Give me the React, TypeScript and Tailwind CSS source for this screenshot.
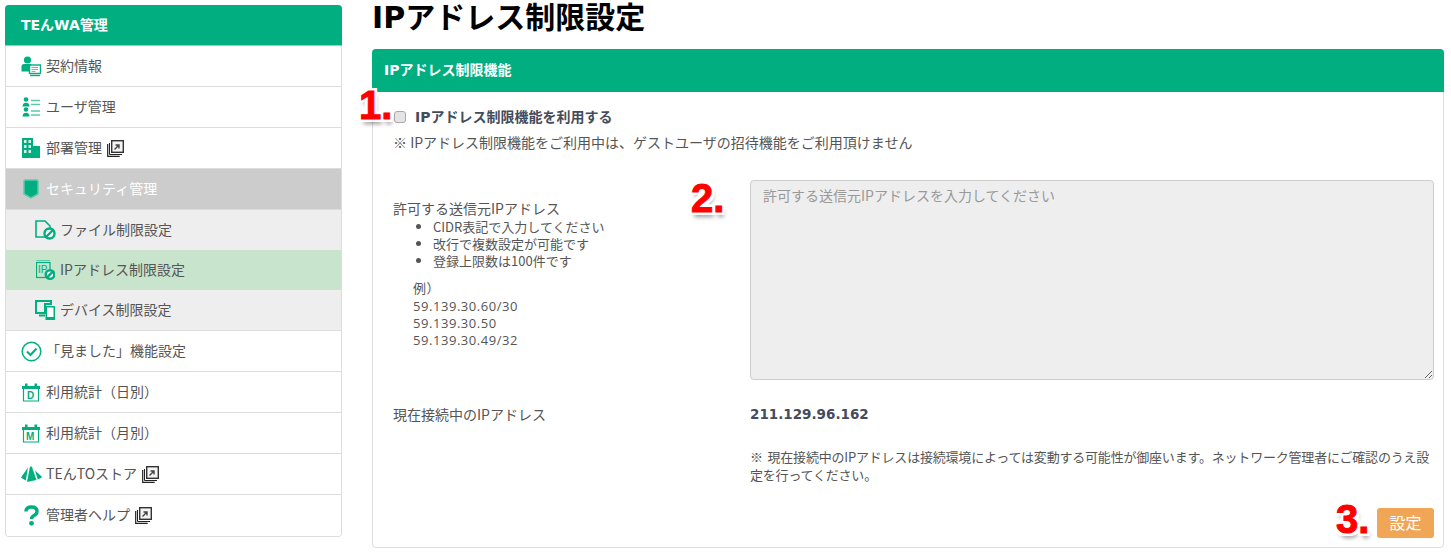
import { ReactNode } from 'react';

function ExternalIcon() {
  return (
    <svg width="17" height="17" viewBox="0 0 17 17" className="ml-[5px] shrink-0">
      <path d="M0.700 4v12.300h12" fill="none" stroke="#222" strokeWidth="1.200" />
      <path d="M2.500 3v11.500H15" fill="none" stroke="#222" strokeWidth="1" />
      <rect x="4.700" y="0.700" width="11.600" height="11.600" fill="#f4f4f4" stroke="#333" strokeWidth="1.400" />
      <path d="M7.500 9.500l4-4M8.500 5h3.500v3.500" fill="none" stroke="#444" strokeWidth="1.400" />
    </svg>
  );
}

function Ban({ cx, cy, r = 5 }: { cx: number; cy: number; r?: number }) {
  return (
    <g>
      <circle cx={cx} cy={cy} r={r} fill="#fff" stroke="#00ae7f" strokeWidth="2.400" />
      <path d={`M${cx - r + 1.500} ${cy + r - 1.500}L${cx + r - 1.500} ${cy - r + 1.500}`} stroke="#00ae7f" strokeWidth="2.400" />
    </g>
  );
}

const ICONS: Record<string, ReactNode> = {
  contract: (
    <svg width="20" height="21" viewBox="0 0 20 21">
      <circle cx="6.500" cy="4" r="3.600" fill="#00ae7f" />
      <path d="M0.500 15.500v-5q0-2.500 2.500-2.500h6q2 0 2 1.500v6z" fill="#00ae7f" />
      <rect x="8.500" y="9" width="11" height="8.500" fill="#fff" stroke="#00ae7f" strokeWidth="1.400" />
      <path d="M10.500 11.500h6.500M10.500 13.500h6.500M10.500 15.500h4" stroke="#5cc9ab" />
      <path d="M9 19.500h10" stroke="#00ae7f" strokeWidth="1.400" />
    </svg>
  ),
  users: (
    <svg width="18" height="20" viewBox="0 0 18 20">
      <circle cx="4" cy="2.500" r="2.300" fill="#00ae7f" />
      <path d="M0.500 9.500q0-3.800 3.500-3.800t3.500 3.800z" fill="#00ae7f" />
      <circle cx="4" cy="12.500" r="2.300" fill="#00ae7f" />
      <path d="M0.500 19.500q0-3.800 3.500-3.800t3.500 3.800z" fill="#00ae7f" />
      <path d="M9 3.500h9M9 7.500h9M9 14h9M9 18h9" stroke="#5cc9ab" strokeWidth="1.300" />
    </svg>
  ),
  dept: (
    <svg width="18" height="20" viewBox="0 0 18 20">
      <rect x="0" y="0" width="11" height="20" fill="#00ae7f" />
      <rect x="11" y="8" width="7" height="12" fill="#00ae7f" />
      <path d="M2 2h2.500v3H2zM6.500 2H9v3H6.500zM2 7h2.500v3H2zM6.500 7H9v3H6.500zM2 12h2.500v3H2zM6.500 12H9v3H6.500z" fill="#d8f3ea" />
    </svg>
  ),
  shield: (
    <svg width="16" height="20" viewBox="0 0 16 20">
      <path d="M1 2.500Q1 1 2.500 1h11Q15 1 15 2.500v12.500L8 19 1 15z" fill="#00ae7f" stroke="#5cc9ab" strokeWidth="1.500" />
    </svg>
  ),
  file: (
    <svg width="21" height="20" viewBox="0 0 21 20">
      <path d="M1 1h9l5 5v11H1z" fill="none" stroke="#00ae7f" strokeWidth="1.600" />
      <Ban cx={14.500} cy={13.500} r={5} />
    </svg>
  ),
  ip: (
    <svg width="19" height="20" viewBox="0 0 19 20">
      <path d="M0.500 0.500h13.500" stroke="#5cc9ab" />
      <rect x="0.500" y="2.500" width="13.500" height="15" fill="none" stroke="#00ae7f" strokeWidth="1.200" />
      <text x="2" y="13" fontSize="10" fill="#00ae7f" fontFamily="'Liberation Sans', sans-serif">IP</text>
      <Ban cx={14} cy={14.500} r={4.300} />
    </svg>
  ),
  device: (
    <svg width="20" height="20" viewBox="0 0 20 20">
      <path d="M1 1h15v3H10v9H1z" fill="none" stroke="#00ae7f" strokeWidth="2" />
      <path d="M4 15.500h6" stroke="#00ae7f" strokeWidth="2" />
      <rect x="10.500" y="6" width="9.500" height="14" rx="0.500" fill="#00ae7f" />
      <rect x="12" y="7.500" width="6.500" height="9.500" fill="#fff" />
    </svg>
  ),
  check: (
    <svg width="21" height="21" viewBox="0 0 21 21">
      <circle cx="10.500" cy="10.500" r="9.300" fill="none" stroke="#00ae7f" strokeWidth="1.500" />
      <path d="M6 10.500l3.500 3.500 6-6.500" fill="none" stroke="#00ae7f" strokeWidth="2" />
    </svg>
  ),
  calD: (
    <svg width="18" height="19" viewBox="0 0 18 19">
      <path d="M0 3h18v3H0zM3 0.500h2.500V3H3zM12.500 0.500H15V3h-2.500z" fill="#00ae7f" />
      <path d="M1.500 5v13h15V5" fill="none" stroke="#00ae7f" strokeWidth="1.200" />
      <text x="5" y="15.500" fontSize="10" fontWeight="700" fill="#00ae7f" fontFamily="'Liberation Sans', sans-serif">D</text>
    </svg>
  ),
  calM: (
    <svg width="18" height="19" viewBox="0 0 18 19">
      <path d="M0 3h18v3H0zM3 0.500h2.500V3H3zM12.500 0.500H15V3h-2.500z" fill="#00ae7f" />
      <path d="M1.500 5v13h15V5" fill="none" stroke="#00ae7f" strokeWidth="1.200" />
      <text x="4" y="15.500" fontSize="10" fontWeight="700" fill="#00ae7f" fontFamily="'Liberation Sans', sans-serif">M</text>
    </svg>
  ),
  store: (
    <svg width="21" height="16" viewBox="0 0 21 16">
      <path d="M7 1.500L0.300 11q-.5 1 .7 1.300l3.800 2.200z" fill="#00ae7f" />
      <path d="M9 0.500h1q.8 0 1.200 1l4.300 12.500-9.500 2z" fill="#00ae7f" />
      <path d="M14 4.500l6.700 6q.5.700-.3 1.200l-3.600 1.800z" fill="#00ae7f" />
    </svg>
  ),
  help: (
    <svg width="15" height="21" viewBox="0 0 15 21">
      <path d="M2 6.500Q2 2 7.500 2T13 6.500Q13 9 10 10.500 7.500 11.800 7.500 14" fill="none" stroke="#00ae7f" strokeWidth="3.400" />
      <circle cx="7.500" cy="18.300" r="2.400" fill="#00ae7f" />
    </svg>
  ),
};

type MenuItem = {
  label: string;
  icon: string;
  external?: boolean;
  kind?: 'open' | 'sub' | 'active';
};

const MENU: MenuItem[] = [
  { label: '契約情報', icon: 'contract' },
  { label: 'ユーザ管理', icon: 'users' },
  { label: '部署管理', icon: 'dept', external: true },
  { label: 'セキュリティ管理', icon: 'shield', kind: 'open' },
  { label: 'ファイル制限設定', icon: 'file', kind: 'sub' },
  { label: 'IPアドレス制限設定', icon: 'ip', kind: 'active' },
  { label: 'デバイス制限設定', icon: 'device', kind: 'sub' },
  { label: '「見ました」機能設定', icon: 'check' },
  { label: '利用統計（日別）', icon: 'calD' },
  { label: '利用統計（月別）', icon: 'calM' },
  { label: 'TEんTOストア', icon: 'store', external: true },
  { label: '管理者ヘルプ', icon: 'help', external: true },
];

function Row({ item, last }: { item: MenuItem; last: boolean }) {
  const isSub = item.kind === 'sub' || item.kind === 'active';
  let tone = 'bg-white text-[#555]';
  if (item.kind === 'open') tone = 'bg-[#cccccc] text-white';
  if (item.kind === 'sub') tone = 'bg-[#eeeeee] text-[#555]';
  if (item.kind === 'active') tone = 'bg-[#c8e4cc] text-[#555]';
  // the last sub row carries the divider, so it is one pixel taller
  const lastSub = item.icon === 'device';
  const h = isSub && !lastSub ? 'h-10' : 'h-[41px]';
  return (
    <div
      className={`flex items-center text-[14px] ${h} ${tone} ${isSub ? 'pl-[24px]' : 'pl-[12px]'} ${
        last || (isSub && !lastSub) ? '' : 'border-b border-[#dddddd]'
      } ${last ? 'rounded-b-[3px]' : ''}`}
    >
      <span className={`flex justify-center shrink-0 ${isSub ? 'w-[30px]' : 'w-[26px]'}`}>{ICONS[item.icon]}</span>
      <span className={`whitespace-nowrap leading-none pb-[3px] ${isSub ? '' : 'ml-[2px]'}`}>{item.label}</span>
      {item.external && <ExternalIcon />}
    </div>
  );
}

function Marker({ text, className }: { text: string; className: string }) {
  return (
    <span
      className={`absolute font-bold text-[40px] leading-none text-[#ff0000] [-webkit-text-stroke:1px_#ff0000] [font-family:'Liberation_Sans',sans-serif] [text-shadow:3px_3px_0_#fff,-3px_-3px_0_#fff,3px_-3px_0_#fff,-3px_3px_0_#fff,0_3px_0_#fff,3px_0_0_#fff,-3px_0_0_#fff,0_-3px_0_#fff,2px_5px_4px_#00000066] ${className}`}
    >
      {text}
    </span>
  );
}

export default function App() {
  return (
    <div className="relative flex items-start w-[1451px] h-[557px] bg-white pt-[5px] pl-[5px] text-[#555] [font-family:'Noto_Sans_CJK_JP','Liberation_Sans',sans-serif]">
      <aside className="w-[337px] shrink-0 rounded-[4px] border border-[#dddddd] border-t-[#cccccc]">
        <div className="flex items-center h-[41px] -mt-px -mx-px bg-[#00ae7f] rounded-t-[4px] border-b border-[#bbbbbb] pl-[16px] text-[14px] font-bold text-white [font-family:'DejaVu_Sans','Noto_Sans_CJK_JP',sans-serif]">
          TEんWA管理
        </div>
        {MENU.map((item, i) => (
          <Row key={item.label} item={item} last={i === MENU.length - 1} />
        ))}
      </aside>

      <main className="ml-[30px] w-[1072px] shrink-0 -mt-[5px]">
        <h1 className="h-[49px] pt-[3px] text-[30px] leading-[30px] font-bold text-black [font-family:'DejaVu_Sans','Noto_Sans_CJK_JP',sans-serif]">
          IPアドレス制限設定
        </h1>
        <section className="h-[499px] rounded-[4px] border border-[#dddddd] flex flex-col">
          <div className="flex items-center h-[43px] -mt-px -mx-px shrink-0 bg-[#00ae7f] rounded-t-[4px] pl-[12px] pb-[1px] text-[14px] font-bold text-white [font-family:'DejaVu_Sans','Noto_Sans_CJK_JP',sans-serif]">
            IPアドレス制限機能
          </div>
          <div className="flex-1 flex flex-col pl-[20px] pr-[9px] pb-[9px] text-[14px]">
            <label className="flex items-center h-[20px] mt-[15px]">
              <input type="checkbox" className="appearance-none w-[12px] h-[12px] ml-px rounded-[3px] border border-[#aaaaaa] bg-[#e4e4e4]" />
              <span className="ml-[9px] text-[14px] font-bold text-[#444c5c] [font-family:'DejaVu_Sans','Noto_Sans_CJK_JP',sans-serif]">
                IPアドレス制限機能を利用する
              </span>
            </label>
            <p className="mt-[5px] leading-[20px]">※ IPアドレス制限機能をご利用中は、ゲストユーザの招待機能をご利用頂けません</p>

            <div className="flex mt-[28px]">
              <div className="w-[357px] shrink-0 pt-[19px]">
                <p className="leading-[18px]">許可する送信元IPアドレス</p>
                <ul className="list-disc pl-[40px] text-[13px] leading-[17px] mt-[1px]">
                  <li>CIDR表記で入力してください</li>
                  <li>改行で複数設定が可能です</li>
                  <li>登録上限数は100件です</li>
                </ul>
                <div className="mt-[11px] ml-[20px] text-[13px] leading-[17px] tracking-[0.55px] [font-family:'Open_Sans','Noto_Sans_CJK_JP',sans-serif]">
                  <p className="mb-px">例）</p>
                  <p>59.139.30.60/30</p>
                  <p>59.139.30.50</p>
                  <p>59.139.30.49/32</p>
                </div>
              </div>
              <textarea
                disabled
                placeholder="許可する送信元IPアドレスを入力してください"
                className="w-[684px] h-[200px] rounded-[4px] border border-[#cccccc] bg-[#eeeeee] px-[12px] py-[4px] text-[14px] placeholder:text-[#999999]"
              />
            </div>

            <div className="flex mt-[24px]">
              <p className="w-[357px] shrink-0 leading-[20px]">現在接続中のIPアドレス</p>
              <div className="w-[684px]">
                <p className="text-[13.500px] leading-[20px] font-bold text-[#444c5c] [font-family:'DejaVu_Sans',sans-serif]">211.129.96.162</p>
                <p className="mt-[24px] text-[13px] leading-[18px] tracking-[-0.2px] [word-spacing:2px]">
                  ※ 現在接続中のIPアドレスは接続環境によっては変動する可能性が御座います。ネットワーク管理者にご確認のうえ設定を行ってください。
                </p>
              </div>
            </div>

            <div className="mt-auto flex justify-end">
              <button className="w-[57px] h-[30px] rounded-[3px] bg-[#f0a656] text-[16px] leading-none pb-[2px] text-white">設定</button>
            </div>
          </div>
        </section>
      </main>

      <Marker text="1." className="left-[359px] top-[85px]" />
      <Marker text="2." className="left-[691px] top-[178px]" />
      <Marker text="3." className="left-[1336px] top-[499px]" />
    </div>
  );
}
